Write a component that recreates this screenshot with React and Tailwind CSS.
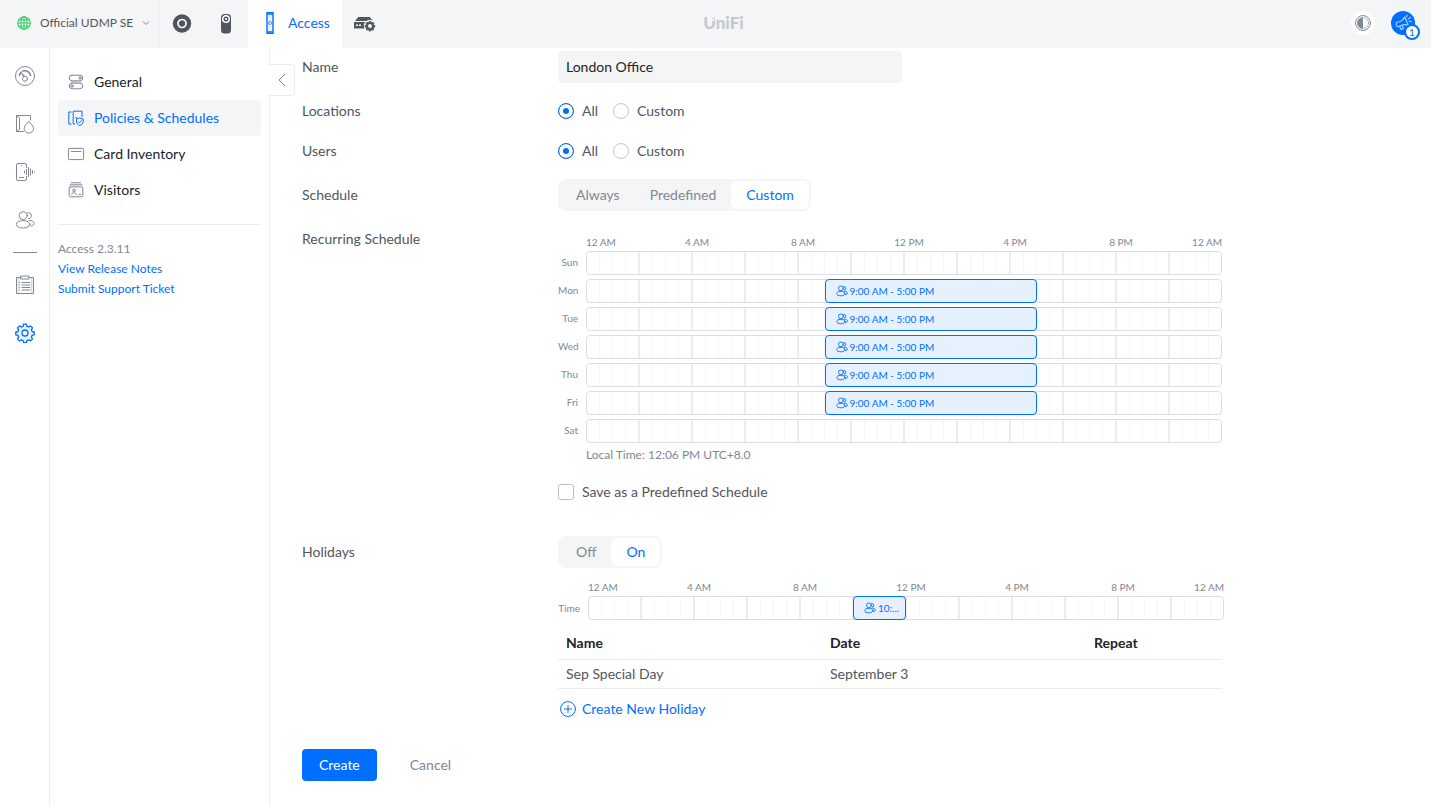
import React, { useState } from "react";

function Svg({ size = 20, className = "", children, ...rest }) {
  return (
    <svg
      width={size}
      height={size}
      viewBox="0 0 20 20"
      fill="none"
      stroke="currentColor"
      strokeWidth="1"
      strokeLinecap="round"
      strokeLinejoin="round"
      aria-hidden="true"
      className={`shrink-0 ${className}`}
      {...rest}
    >
      {children}
    </svg>
  );
}

const GlobeIcon = () => (
  <Svg size={14} className="text-[#38cc65]" strokeWidth="1.5">
    <circle cx="10" cy="10" r="9" />
    <ellipse cx="10" cy="10" rx="4.5" ry="9" />
    <path d="M10 1v18M1 10h18M2.5 5.5h15M2.5 14.5h15" />
  </Svg>
);

const NetworkIcon = () => (
  <Svg stroke="none">
    <circle cx="10" cy="9.5" r="9.2" fill="#50565e" />
    <circle cx="10" cy="9.5" r="4" fill="none" stroke="#fff" strokeWidth="1.7" />
  </Svg>
);

const ProtectIcon = () => (
  <Svg stroke="none">
    <rect x="5" y="0" width="10" height="19.5" rx="3.5" fill="#50565e" />
    <circle cx="10" cy="5" r="4" fill="#fff" />
    <circle cx="10" cy="5" r="1.8" fill="none" stroke="#50565e" strokeWidth="1.4" />
  </Svg>
);

const AccessIcon = () => (
  <svg width="8" height="22" viewBox="0 0 8 22" fill="none" aria-hidden="true">
    <rect x="1" y=".5" width="6" height="21" fill="#e5f1ff" stroke="#006fff" strokeWidth="1.4" />
    <path d="M1 2h6M1 20h6" stroke="#006fff" strokeWidth="1.6" />
    <circle cx="4" cy="11" r="1.5" stroke="#4797ff" />
  </svg>
);

const GearShape =
  "M8.6 1.2h2.8l.5 2.1 1.7.7 1.9-1.1 2 2-1.1 1.9.7 1.7 2.1.5v2.8l-2.1.5-.7 1.7 1.1 1.9-2 2-1.900-1.100-1.700.7-.5 2.100H8.600l-.5-2.100-1.700-.7-1.900 1.100-2-2 1.100-1.900-.7-1.700-2.100-.5V9l2.100-.5.7-1.700-1.100-1.900 2-2L6.400 4l1.700-.7z";

const ConsoleIcon = () => (
  <svg width="22" height="16" viewBox="0 0 22 16" fill="none" aria-hidden="true">
    <path d="M4.2 1h11.600L19 5H1z" fill="#50565e" />
    <path d="M0 6h19v6.500H0z" fill="#50565e" />
    <path d="M2 8.500h2v1.500H2zM5 8.500h2v1.500H5z" fill="#fff" />
    <circle cx="16" cy="10" r="6.200" fill="#f4f5f6" />
    <g transform="translate(10.700 4.700) scale(.53)">
      <path d={GearShape} fill="#50565e" stroke="#50565e" strokeWidth="1.600" />
      <circle cx="10" cy="10" r="3.700" fill="#f4f5f6" />
    </g>
  </svg>
);

const DashboardIcon = () => (
  <Svg>
    <circle cx="10" cy="10" r="9.5" />
    <path d="M4.4 9.200a6 6 0 0 1 2-3.100M8 5a6 6 0 0 1 7.600 4.200" strokeWidth="1.600" />
    <circle cx="10" cy="12.700" r="2.500" />
    <path d="M8.400 10.700 6.800 8M9.300 10.300 7.500 7.700" />
  </Svg>
);

const DoorIcon = () => (
  <Svg>
    <path d="M8.500 17.500H1.500v-16h14V6M1.500 1.500l3 2.500v11.500l-3 2" />
    <path d="M13.800 7.500c1.500 2.300 4.700 3.800 4.700 6.900a4.700 4.700 0 0 1-9.400 0c0-3.100 3.200-4.600 4.700-6.900z" />
  </Svg>
);

const ReaderIcon = () => (
  <Svg>
    <path d="M11.500 5.500V3A1.500 1.500 0 0 0 10 1.500H3A1.500 1.500 0 0 0 1.500 3v14A1.500 1.500 0 0 0 3 18.500h7a1.500 1.500 0 0 0 1.500-1.500v-2.500" />
    <path d="M4.500 15.500h4M6.300 3.500h.2M9.500 9v2M11.500 7.500v5M13.500 5.500v9M15.500 7v6M17.500 8.500v3M19.500 9.800v.4" />
  </Svg>
);

const UsersIcon = ({ size = 20, strokeWidth = 1 }) => (
  <Svg size={size} strokeWidth={strokeWidth}>
    <circle cx="8.200" cy="5.600" r="4" />
    <ellipse cx="8.200" cy="14.300" rx="6.900" ry="3.700" />
    <path d="M12.400 2.900a3 3 0 1 1 1.100 5.800M14.300 10.300c2.600 0 4.900 1.600 4.900 3.200 0 1.300-1.400 2.200-3.200 2.500" />
  </Svg>
);

const LogIcon = () => (
  <Svg>
    <path d="M6 2.500H1.500v16h17v-16H14" />
    <path d="M6 1h8v3H6zM7 7.500h8M7 10h8M7 12.500h8M7 15h8M4.500 7.500h.1M4.500 10h.1M4.500 12.500h.1M4.500 15h.1" />
    <path d="M3.200 3.500v14M16.800 3.500v14" strokeWidth=".4" />
  </Svg>
);

const SettingsIcon = () => (
  <Svg>
    <path d={GearShape} fill="#e5f1ff" strokeWidth="1.300" />
    <circle cx="10" cy="10" r="3" fill="#fff" strokeWidth="1.300" />
  </Svg>
);

const GeneralIcon = () => (
  <Svg size={16} strokeWidth="1.250">
    <rect x="1.500" y="1.500" width="17" height="7" rx="3.500" />
    <rect x="1.500" y="11.500" width="17" height="7" rx="3.500" />
    <circle cx="15" cy="5" r="1.500" />
    <circle cx="5" cy="15" r="1.500" />
    <path d="M5 8.500h12l-2 3H3z" fill="#b9bec5" stroke="none" />
  </Svg>
);

const PoliciesIcon = () => (
  <Svg size={16} strokeWidth="1.250">
    <path d="M4 2.500H1v15h3" />
    <path d="M8.500 17.500h-2v-16h11v7M9.500 9.500h1" />
    <path d="M14.800 10.200l4.200 1.200v3.200c0 2.200-1.800 3.800-4.200 4.700-2.400-.9-4.200-2.500-4.200-4.700v-3.200z" />
    <path d="m13 14.500 1.500 1.500 2.500-2.800" />
  </Svg>
);

const CardIcon = () => (
  <Svg size={16} strokeWidth="1.250">
    <rect x=".6" y="3" width="18.800" height="14" rx="1" />
    <path d="M4 6.800h12" />
  </Svg>
);

const VisitorsIcon = () => (
  <Svg size={16} strokeWidth="1.250">
    <path d="M4 1h12M2.500 3.500h15" />
    <rect x="1.500" y="6" width="17" height="12.500" rx="1.500" />
    <circle cx="7.500" cy="10.500" r="1.700" />
    <path d="M4.500 15.500c.5-3 5.500-3 6 0M13.500 15.500h2.500" />
  </Svg>
);

const MegaphoneIcon = () => (
  <svg
    width="18"
    height="18"
    viewBox="0 0 20 20"
    fill="none"
    stroke="#a9d0ff"
    strokeWidth="1.300"
    strokeLinejoin="round"
    strokeLinecap="round"
    aria-hidden="true"
  >
    <path d="M3.500 9.200 7 8.300c2.200-.9 3.800-2.600 4.800-5l4.200 9.200c-2.500-1-5-1-7.200-.1l-3.400 1.500c-2.800.8-4.200-3.600-1.900-4.700zM6.300 13.600l1.500 3.700 2.600-1-1.500-3.900" />
    <path d="M14 3.300l.4-2M15.800 5.500l2.700-2M16.800 8.200l2.400.2" />
  </svg>
);

const PlusCircle = () => (
  <Svg size={16} strokeWidth="1.250">
    <circle cx="10" cy="10" r="9.300" />
    <path d="M10 5.500v9M5.500 10h9" />
  </Svg>
);

function Header() {
  return (
    <header className="flex h-12 shrink-0 items-stretch bg-[#f4f5f6]">
      <div className="flex flex-1 items-stretch">
        <button
          type="button"
          className="flex h-[46px] w-40 items-center gap-[9px] border-r border-[#eceef1] pl-[17px] text-[12px] whitespace-nowrap text-[#50565e]"
        >
          <GlobeIcon />
          Official UDMP SE
          <svg width="8" height="8" viewBox="0 0 8 8" fill="none" stroke="#808893" aria-hidden="true">
            <path d="m1 2.500 3 3 3-3" />
          </svg>
        </button>
        <button type="button" aria-label="Network" className="flex w-11 items-center justify-center">
          <NetworkIcon />
        </button>
        <button type="button" aria-label="Protect" className="flex w-11 items-center justify-center">
          <ProtectIcon />
        </button>
        <button type="button" className="flex items-center gap-[14px] bg-white pr-3 pb-[2px] pl-[18px] text-[14px] text-[#006fff]">
          <AccessIcon />
          Access
        </button>
        <button type="button" aria-label="Console settings" className="flex w-[46px] items-center justify-center">
          <ConsoleIcon />
        </button>
      </div>
      <div className="relative flex items-center pb-[2px] pl-8 text-[17px] font-black text-[#c4c9d0]">
        UniFi
        <svg width="5" height="5" viewBox="0 0 5 5" className="absolute top-4 left-10" aria-hidden="true">
          <path d="M0 0h5v3H3v2H1V3H0z" fill="#f4f5f6" />
          <path d="M1 2h1v1H1zM3 1h1v1H3zM3 3h1v1H3z" fill="#c4c9d0" />
        </svg>
      </div>
      <div className="flex h-[46px] flex-1 items-center justify-end gap-4 pr-4">
        <button
          type="button"
          aria-label="Toggle theme"
          className="flex size-6 items-center justify-center rounded-full bg-white text-[#808893]"
        >
          <Svg size={16} strokeWidth="1.250">
            <circle cx="10" cy="10" r="9.300" />
            <circle cx="10" cy="10" r="7" strokeWidth=".7" />
            <path d="M10 3a7 7 0 0 0 0 14z" fill="currentColor" stroke="none" />
          </Svg>
        </button>
        <button
          type="button"
          aria-label="Announcements"
          className="relative flex size-6 items-center justify-center rounded-full bg-[#006fff]"
        >
          <MegaphoneIcon />
          <span className="absolute top-[13px] left-[13px] flex size-4 items-center justify-center rounded-full border-2 border-[#006fff] bg-white text-[10px] leading-none text-[#006fff]">
            1
          </span>
        </button>
      </div>
    </header>
  );
}

function Rail() {
  const link = "block size-5";
  return (
    <nav
      aria-label="Main"
      className="flex w-[50px] shrink-0 flex-col items-center border-r border-[#ebedf0] pt-[18px] text-[#808893]"
    >
      <div className="flex flex-col gap-7">
        <a href="#dashboard" aria-label="Dashboard" className={link}><DashboardIcon /></a>
        <a href="#doors" aria-label="Doors" className={link}><DoorIcon /></a>
        <a href="#devices" aria-label="Devices" className={link}><ReaderIcon /></a>
        <a href="#users" aria-label="Users" className={link}><UsersIcon /></a>
      </div>
      <hr className="my-[22px] w-6 border-[#808893]" />
      <div className="flex flex-col gap-7">
        <a href="#logs" aria-label="Logs" className={link}><LogIcon /></a>
        <a href="#settings" aria-label="Settings" className="block size-5 text-[#006fff]"><SettingsIcon /></a>
      </div>
    </nav>
  );
}

const MENU = [
  { label: "General", Icon: GeneralIcon },
  { label: "Policies & Schedules", Icon: PoliciesIcon, active: true },
  { label: "Card Inventory", Icon: CardIcon },
  { label: "Visitors", Icon: VisitorsIcon },
];

function Sidebar() {
  return (
    <aside className="relative w-[220px] shrink-0 border-r border-[#ebedf0] px-2 pt-4">
      <nav aria-label="Settings">
        {MENU.map(({ label, Icon, active }) => (
          <a
            key={label}
            href="#menu"
            className={`flex h-9 items-center gap-[10px] rounded px-[10px] text-[14px] whitespace-nowrap ${
              active ? "bg-[#f4f5f6] text-[#006fff]" : "text-[#212327]"
            }`}
          >
            <span className={active ? "text-[#006fff]" : "text-[#808893]"}>
              <Icon />
            </span>
            {label}
          </a>
        ))}
      </nav>
      <div className="mt-4 flex flex-col items-start border-t border-[#ebedf0] pt-[14px] text-[12px] leading-5 text-[#808893]">
        <span>Access 2.3.11</span>
        <a href="#notes" className="text-[#006fff]">View Release Notes</a>
        <a href="#support" className="text-[#006fff]">Submit Support Ticket</a>
      </div>
      <button
        type="button"
        aria-label="Collapse menu"
        className="absolute top-4 left-full flex h-8 w-[26px] items-center justify-center rounded-r border border-l-0 border-[#ebedf0] bg-white text-[#808893]"
      >
        <svg width="8" height="14" viewBox="0 0 8 14" fill="none" stroke="currentColor" aria-hidden="true">
          <path d="M7 1 1 7l6 6" />
        </svg>
      </button>
    </aside>
  );
}

function Row({ label, labelId, htmlFor, tall, children }) {
  const style = `text-[14px] leading-6 ${tall ? "py-1" : ""}`;
  return (
    <div className="grid grid-cols-[256px_minmax(0,1fr)] items-start">
      {htmlFor ? (
        <label htmlFor={htmlFor} className={style}>{label}</label>
      ) : (
        <span id={labelId} className={style}>{label}</span>
      )}
      <div className="min-w-0">{children}</div>
    </div>
  );
}

function Radios({ name }) {
  return (
    <div role="radiogroup" aria-labelledby={`${name}-label`} className="flex gap-[15px] text-[14px] leading-6">
      {["All", "Custom"].map((option) => (
        <label key={option} className="flex items-center gap-2">
          <input
            type="radio"
            name={name}
            defaultChecked={option === "All"}
            className="size-4 appearance-none rounded-full border border-[#c4c9d0] bg-white checked:border-[#006fff] checked:bg-[#006fff] checked:shadow-[inset_0_0_0_4px_#fff]"
          />
          {option}
        </label>
      ))}
    </div>
  );
}

function Segmented({ options, initial, labelledBy }) {
  const [value, setValue] = useState(initial);
  return (
    <div
      role="group"
      aria-labelledby={labelledBy}
      className="inline-flex h-8 rounded-lg bg-[#f4f5f6] p-[2px] pl-[3px] align-top"
    >
      {options.map((option) => (
        <button
          key={option}
          type="button"
          aria-pressed={value === option}
          onClick={() => setValue(option)}
          className={`rounded-md px-[15px] text-[14px] ${value === option ? "bg-white text-[#006fff]" : "text-[#808893]"}`}
        >
          {option}
        </button>
      ))}
    </div>
  );
}

const HOURS = ["4 AM", "8 AM", "12 PM", "4 PM", "8 PM"];

function HourScale() {
  return (
    <div className="flex text-[10px] leading-[18px] whitespace-nowrap text-[#808893]">
      <span className="w-[58px]">12 AM</span>
      {HOURS.map((hour) => (
        <span key={hour} className="flex-1 text-center">{hour}</span>
      ))}
      <span className="w-12 text-right">12 AM</span>
    </div>
  );
}

function Track({ event }) {
  return (
    <div className="relative flex h-6 flex-1 rounded border border-[#dbdee6]">
      {Array.from({ length: 48 }, (_, i) => (
        <span
          key={i}
          className={`min-w-0 flex-1 ${
            i === 47 ? "" : i % 4 === 3 ? "border-r-2 border-[#ebecf2]" : "border-r border-[#f4f5f8]"
          }`}
        />
      ))}
      {event && (
        <div className="absolute -inset-px">
          <button
            type="button"
            aria-label={event.title}
            className="absolute inset-y-0 flex items-center gap-[2px] rounded border border-[#006fff] bg-[#e5f1ff] pr-1 pl-[10px] text-[10px] whitespace-nowrap text-[#006fff]"
            style={{ left: `${(event.start / 24) * 100}%`, width: `${((event.end - event.start) / 24) * 100}%` }}
          >
            <UsersIcon size={12} strokeWidth={1.5} />
            <span className="leading-4">{event.label}</span>
          </button>
        </div>
      )}
    </div>
  );
}

const WORK = { start: 9, end: 17, label: "9:00 AM - 5:00 PM", title: "9:00 AM - 5:00 PM" };
const HOLIDAY = { start: 10, end: 12, label: "10:...", title: "10:00 AM - 12:00 PM" };
const WEEK = [
  ["Sun", null],
  ["Mon", WORK],
  ["Tue", WORK],
  ["Wed", WORK],
  ["Thu", WORK],
  ["Fri", WORK],
  ["Sat", null],
];

export default function App() {
  return (
    <div className="flex min-h-screen flex-col bg-white font-['Lato',sans-serif] leading-5 text-[#50565e]">
      <Header />
      <div className="flex flex-1 items-stretch">
        <Rail />
        <Sidebar />
        <main className="min-w-0 flex-1 px-8 pt-[3px] pb-6">
          <form className="flex max-w-[920px] flex-col" onSubmit={(e) => e.preventDefault()}>
            <div className="flex flex-col gap-4">
              <Row label="Name" htmlFor="policy-name" tall>
                <input
                  id="policy-name"
                  defaultValue="London Office"
                  className="block h-8 w-full max-w-[344px] rounded bg-[#f5f5f5] px-2 pb-[2px] text-[14px] text-[#212327]"
                />
              </Row>
              <Row label="Locations" labelId="locations-label">
                <Radios name="locations" />
              </Row>
              <Row label="Users" labelId="users-label">
                <Radios name="users" />
              </Row>
              <Row label="Schedule" labelId="schedule-label" tall>
                <Segmented options={["Always", "Predefined", "Custom"]} initial="Custom" labelledBy="schedule-label" />
              </Row>
              <Row label="Recurring Schedule">
                <div className="pt-[6px] pl-7">
                  <HourScale />
                </div>
                <div className="flex flex-col gap-1">
                  {WEEK.map(([day, event]) => (
                    <div key={day} className="flex items-start">
                      <span className="w-7 pr-2 text-right text-[10px] leading-[22px] text-[#808893]">{day}</span>
                      <Track event={event} />
                    </div>
                  ))}
                </div>
                <p className="pl-7 text-[12px] leading-6 text-[#808893]">Local Time: 12:06 PM UTC+8.0</p>
                <label className="mt-[13px] flex w-fit items-center gap-2 text-[14px] leading-6">
                  <input
                    type="checkbox"
                    className="size-4 appearance-none rounded-[3px] border border-[#b9bec5] bg-white checked:bg-[#006fff]"
                  />
                  Save as a Predefined Schedule
                </label>
              </Row>
            </div>
            <div className="mt-8">
              <Row label="Holidays" labelId="holidays-label" tall>
                <Segmented options={["Off", "On"]} initial="On" labelledBy="holidays-label" />
                <div className="-mr-[2px] pt-[10px] pl-[30px]">
                  <HourScale />
                </div>
                <div className="-mr-[2px] flex items-start">
                  <span className="w-[30px] pr-2 text-right text-[10px] leading-6 text-[#808893]">Time</span>
                  <Track event={HOLIDAY} />
                </div>
                <table className="mt-2 w-full table-fixed text-left text-[14px]">
                  <thead>
                    <tr className="h-[31px] border-b border-[#ebedf0] text-[#212327]">
                      <th className="w-[264px] px-2 font-bold">Name</th>
                      <th className="w-[264px] px-2 font-bold">Date</th>
                      <th className="px-2 font-bold">Repeat</th>
                    </tr>
                  </thead>
                  <tbody>
                    <tr className="h-[29px] border-b border-[#ebedf0]">
                      <td className="px-2">Sep Special Day</td>
                      <td className="px-2">September 3</td>
                      <td className="px-2" />
                    </tr>
                  </tbody>
                </table>
                <button
                  type="button"
                  className="mt-2 ml-[2px] flex items-center gap-[6px] text-[14px] leading-6 text-[#006fff]"
                >
                  <PlusCircle />
                  Create New Holiday
                </button>
              </Row>
            </div>
            <div className="mt-7 flex gap-4">
              <button type="submit" className="h-8 rounded bg-[#006fff] px-[17px] text-[14px] text-white">Create</button>
              <button type="button" className="h-8 px-[17px] text-[14px] text-[#808893]">Cancel</button>
            </div>
          </form>
        </main>
      </div>
    </div>
  );
}
